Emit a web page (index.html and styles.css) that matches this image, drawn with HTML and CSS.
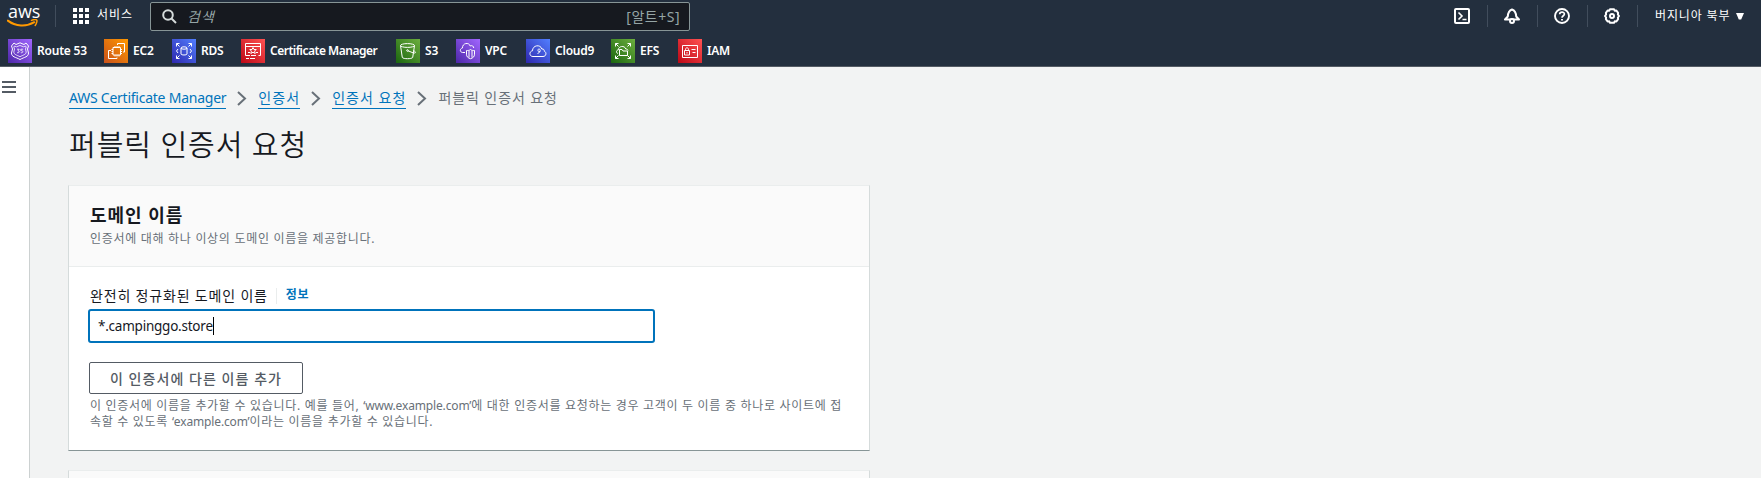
FILE: index.html
```html
<!DOCTYPE html>
<html lang="ko">
<head>
<meta charset="utf-8">
<title>퍼블릭 인증서 요청</title>
<link rel="stylesheet" href="styles.css">
</head>
<body>
<header class="header">
  <div class="topbar">
    <div class="logo"><span class="logo-text">aws</span>
      <svg class="smile" width="32" height="9" viewBox="0 0 32 9"><path d="M.8 1.6C8.500 7.500 19.500 8 27.300 3.200" fill="none" stroke="#f90" stroke-width="2" stroke-linecap="round"/><path d="M24.500 1.400c2-.9 4.500-.9 5.200-.4.600.8-.1 3.700-1.500 5.400" fill="none" stroke="#f90" stroke-width="1.500" stroke-linecap="round"/></svg>
    </div>
    <span class="divider"></span>
    <div class="services">
      <svg width="16" height="16" viewBox="0 0 16 16" fill="#fff"><path d="M0 0h4v4H0zM6 0h4v4H6zM12 0h4v4h-4zM0 6h4v4H0zM6 6h4v4H6zM12 6h4v4h-4zM0 12h4v4H0zM6 12h4v4H6zM12 12h4v4h-4z"/></svg>
      <span class="services-label">서비스</span>
    </div>
    <div class="search">
      <svg width="15" height="15" viewBox="0 0 15 15" fill="none" stroke="#d5dbdb" stroke-width="2"><circle cx="6" cy="6" r="4.800"/><path d="M9.500 9.500l4.500 4.500"/></svg>
      <span class="search-hint">검색</span>
      <span class="search-key">[알트+S]</span>
    </div>
    <div class="tools">
      <span class="tool"><svg width="16" height="16" viewBox="0 0 16 16" fill="none" stroke="#fff" stroke-width="2"><rect x="1" y="1" width="14" height="14" rx="1"/><path d="M4.500 4.500L8 8l-3.500 3.500M8.500 11.500h4" stroke-width="1.600"/></svg></span>
      <span class="tool"><svg width="16" height="16" viewBox="0 0 16 16" fill="none" stroke="#fff" stroke-width="2" stroke-linejoin="round"><path d="M1 11.500h14L12.200 8.500C12 5 11 2.500 8 1.500 5 2.500 4 5 3.800 8.500z"/><circle cx="8" cy="13" r="2" fill="#232f3e"/></svg></span>
      <span class="tool"><svg width="16" height="16" viewBox="0 0 16 16" fill="none" stroke="#fff" stroke-width="1.900"><circle cx="8" cy="8" r="7"/><path d="M5.700 6.300c0-3 4.700-2.900 4.700-.2C10.400 7.800 8 7.700 8 9.800" stroke-width="1.700"/><path d="M8 10.900v1.700"/></svg></span>
      <span class="tool"><svg width="16" height="16" viewBox="0 0 16 16" fill="none" stroke="#fff" stroke-width="2"><path d="M6 1.200h4l.7 1.500 1.700-.2 1.700 2.300-.2 1.700 1.100 1.500-1.100 1.500.2 1.700-1.700 2.300-1.700-.2-.7 1.500H6l-.7-1.500-1.700.2-1.700-2.300.2-1.700L1 8l1.100-1.500-.2-1.700 1.700-2.300 1.700.2z" stroke-linejoin="round"/><circle cx="8" cy="8" r="2"/></svg></span>
      <div class="region"><span class="region-label">버지니아 북부</span><svg width="8" height="7" viewBox="0 0 8 7"><path d="M0 0h8L5.200 6.500H2.800z" fill="#fff"/></svg></div>
    </div>
  </div>
  <nav class="favorites">
    <a class="fav"><svg class="purple" viewBox="0 0 24 24"><path d="M6 4l2 1.500L12 3.800l4 1.700L18 4l2.500 3-1 3 1 4c0 4-4 4-8.500 6.500C7.500 18 3.500 18 3.500 14l1-4-1-3z"/><path d="M6.500 7l2 .8L12 6.500l3.500 1.300 2-.8.7 1-.7 2 .7 3c0 2.500-3 3-6.200 4.700C8.800 16 5.800 15.500 5.800 13l.7-3-.7-2zM9 10.200h2.200l-1.200 1.500c2 .2 1.500 2.500-1 2M15.200 10.200h-2.400v1.500c3-.3 2.500 2.500 0 2" stroke-width=".8"/></svg><span class="fav-name">Route 53</span></a>
    <a class="fav"><svg class="orange" viewBox="0 0 24 24"><path d="M9 8.500h7.500V16H9zM11 8.500V7M13 8.500V7M15 8.500V7M11 17.500V16M13 17.500V16M15 17.500V16M9 10.500H7.500M9 12.500H7.500M9 14.500H7.500M18 10.500h-1.500M18 12.500h-1.500M18 14.500h-1.500M13.500 6V4.500h7V13H19M7 11.500H4.500v8H13V18.500"/></svg><span class="fav-name">EC2</span></a>
    <a class="fav"><svg class="blue" viewBox="0 0 24 24"><path d="M4.500 7.500v-3h3M4.500 4.500l3 3M16.500 4.500h3v3M19.500 4.500l-3 3M4.500 16.500v3h3M4.500 19.500l3-3M16.500 19.500h3v-3M19.500 19.500l-3-3M6 10l-1.500 2L6 14M18 10l1.500 2-1.500 2M9 9v6c0 1.300 6 1.300 6 0V9"/><ellipse cx="12" cy="9" rx="3" ry="1.200"/></svg><span class="fav-name">RDS</span></a>
    <a class="fav"><svg class="red" viewBox="0 0 24 24"><path d="M4.500 16.500v-12h15v12h-2M4.500 7.500h15M4.500 16.500H7M5 19.500h3M9 19.500h5M7 13.500h2M7 16.500h2M10 16.500h5M15 13.500h2"/><path d="M12 8.500l1 2h2.200l-1.600 1.600.6 2.400-2.200-1.300-2.200 1.300.6-2.400-1.600-1.600H11z"/></svg><span class="fav-name fav-name-tight">Certificate Manager</span></a>
    <a class="fav"><svg class="green" viewBox="0 0 24 24"><ellipse cx="11.500" cy="6.500" rx="7" ry="1.900"/><path d="M4.500 6.500l1.800 12c1.200 1.600 9.200 1.600 10.400 0l1.800-12M12 11.800l5 2c3 .8 3.500-.8.500-2.300"/><circle cx="11.500" cy="11.500" r=".8"/></svg><span class="fav-name">S3</span></a>
    <a class="fav"><svg class="purple" viewBox="0 0 24 24"><path d="M9 13.500H6.500C3.500 13 3.700 9.500 6.500 9 6.200 4 13 2.800 14.200 7c2-1 3.500.3 3.500 2"/><path d="M14.500 10.500c1.200 1 2.500 1 4 1v3.700c0 2.500-1.500 3.800-4 4.500-2.500-.7-4-2-4-4.500v-3.700c1.500 0 2.800 0 4-1zM13 11.500v7M16 11.500v7"/></svg><span class="fav-name">VPC</span></a>
    <a class="fav"><svg class="blue" viewBox="0 0 24 24"><path d="M7 17.500c-4 0-4-5.300-.5-5.700C6.500 6 14.500 5 15.800 10c2-.3 2.500 1 2.500 2.200 2.500.8 2.200 5.300-1.300 5.300z"/><path d="M14 12.500c-2.500 1-2.700-2.800-.8-2.500 2 .3 1 4-1.700 4.500" stroke-width=".9"/></svg><span class="fav-name">Cloud9</span></a>
    <a class="fav"><svg class="green" viewBox="0 0 24 24"><path d="M4.500 7.500v-3h3M4.500 4.500l3 3M16.500 4.500h3v3M19.500 4.500l-3 3M4.500 16.500v3h3M4.500 19.500l3-3M16.500 19.500h3v-3M19.500 19.500l-3-3M8.500 16.500v-6H11l1 1.500h4.500v4.500zM7 14.500c-2.500-.8-1.500-3.500.2-3.500.3-4 6.300-5 7.600-1 1.500 0 2 .7 2.200 1.500"/></svg><span class="fav-name">EFS</span></a>
    <a class="fav"><svg class="red" viewBox="0 0 24 24"><path d="M4.500 6.500h15v12h-15zM6.500 11.500h5v4.500h-5zM7.500 11.500v-1.200c0-2 3-2 3 0v1.200M9 13v1.500M13.500 10.500h4M14.500 13.500h3"/></svg><span class="fav-name">IAM</span></a>
  </nav>
</header>
<div class="body">
  <aside class="side"><svg width="14" height="12" viewBox="0 0 14 12" fill="#545b64"><path d="M0 0h14v2H0zM0 5h14v2H0zM0 10h14v2H0z"/></svg></aside>
  <main class="main">
    <nav class="crumbs">
      <a class="crumb crumb-latin">AWS Certificate Manager</a>
      <svg class="chev" viewBox="0 0 10 15"><path d="M1 1l7 6.500L1 14"/></svg>
      <a class="crumb">인증서</a>
      <svg class="chev" viewBox="0 0 10 15"><path d="M1 1l7 6.500L1 14"/></svg>
      <a class="crumb">인증서 요청</a>
      <svg class="chev" viewBox="0 0 10 15"><path d="M1 1l7 6.500L1 14"/></svg>
      <span class="crumb-current">퍼블릭 인증서 요청</span>
    </nav>
    <h1 class="title">퍼블릭 인증서 요청</h1>
    <section class="card">
      <div class="card-head">
        <h2 class="card-title">도메인 이름</h2>
        <p class="card-sub">인증서에 대해 하나 이상의 도메인 이름을 제공합니다.</p>
      </div>
      <div class="card-body">
        <div class="label-row"><span class="label">완전히 정규화된 도메인 이름</span><a class="info">정보</a></div>
        <div class="input"><span class="value">*.campinggo.store</span><span class="caret"></span></div>
        <div class="button"><span class="button-label">이 인증서에 다른 이름 추가</span></div>
        <p class="help">이 인증서에 이름을 추가할 수 있습니다. 예를 들어, <span class="latin">‘www.example.com’</span>에 대한 인증서를 요청하는 경우 고객이 두 이름 중 하나로 사이트에 접<br>속할 수 있도록 <span class="latin">‘example.com’</span>이라는 이름을 추가할 수 있습니다.</p>
      </div>
    </section>
    <section class="card card-next"><div class="card-head"></div></section>
  </main>
</div>
</body>
</html>
```
FILE: styles.css
```css
* { box-sizing: border-box; }
body { margin: 0; height: 478px; overflow: hidden; background: #f2f3f3; color: #16191f; font-family: "Noto Sans", "Noto Sans CJK KR", sans-serif; font-size: 14px; }
svg { display: block; flex: none; }
span, a, h1, h2, p { white-space: nowrap; }
.header { height: 67px; background: #232f3e; border-bottom: 1px solid #545b64; color: #fff; }
.topbar { display: flex; align-items: center; height: 32px; padding-left: 7px; }
.logo { width: 48px; height: 32px; padding-top: 3px; }
.logo-text { display: block; height: 16px; font: 500 18px/16px "Open Sans", sans-serif; letter-spacing: -0.1px; padding-left: 1px; }
.divider { width: 1px; height: 22px; background: #414d5c; }
.services { display: flex; align-items: center; gap: 8px; margin-left: 17px; width: 77px; }
.services-label { font-size: 12px; line-height: 16px; margin-top: -3px; letter-spacing: 0.9px; }
.search { display: flex; align-items: center; width: 540px; height: 29px; padding: 0 9px 0 11px; border: 1px solid #879596; border-radius: 2px; background: #16191f; color: #95a5a6; }
.search-hint { margin-left: 10px; font-size: 14px; font-style: italic; letter-spacing: 1px; }
.search-key { margin-left: auto; font-size: 14px; letter-spacing: 0.5px; }
.tools { display: flex; align-items: center; margin-left: auto; height: 22px; }
.tool { display: flex; align-items: center; justify-content: flex-end; width: 50px; height: 22px; padding-right: 17px; border-right: 1px solid #414d5c; }
.region { display: flex; align-items: center; gap: 6px; width: 123px; padding-left: 17px; }
.region-label { margin-top: -3px; font-size: 12px; letter-spacing: 0.85px; }
.favorites { display: grid; grid-template-columns: 96px 68px 69px 155px 60px 70px 85px 67px 60px; padding: 7px 0 0 8px; }
.fav { display: flex; align-items: center; gap: 5px; height: 24px; }
.fav svg { width: 24px; height: 24px; fill: none; stroke: #fff; stroke-width: 1; }
.fav-name { font: 600 12px/16px "Noto Sans", sans-serif; letter-spacing: -0.2px; }
.fav-name-tight { letter-spacing: -0.5px; }
.purple { background: linear-gradient(45deg, #4d27a8, #a166ff); }
.orange { background: linear-gradient(45deg, #c8511b, #f90); }
.blue { background: linear-gradient(45deg, #2e27ad, #527fff); }
.red { background: linear-gradient(45deg, #bd0816, #ff5252); }
.green { background: linear-gradient(45deg, #1b660f, #6cae3e); }
.body { display: flex; height: 411px; overflow: hidden; }
.side { width: 30px; padding: 14px 0 0 2px; background: #fff; border-right: 1px solid #ccd1d1; }
.main { width: 840px; height: 411px; overflow: hidden; padding-left: 38px; }
.crumbs { display: flex; align-items: center; height: 22px; margin-top: 20px; padding-left: 1px; color: #687078; }
.crumb { height: 21px; line-height: 19px; color: #0073bb; border-bottom: 1px solid #0073bb; letter-spacing: 1.05px; }
.crumb-latin { letter-spacing: -0.24px; }
.crumb-current { margin-top: -2px; letter-spacing: 0.9px; }
.chev { width: 10px; height: 15px; margin: 0 11px; fill: none; stroke: #687078; stroke-width: 2; }
.title { margin: 16px 0 0; height: 40px; padding-left: 1px; font-size: 29px; line-height: 40px; font-weight: 350; letter-spacing: 0.95px; }
.card { width: 802px; height: 266px; margin-top: 20px; background: #fff; border: 1px solid #d5dbdb; border-top-color: #eaeded; border-bottom-color: #879596; }
.card-next { margin-top: 19px; }
.card-head { height: 81px; padding: 17px 21px 0; background: #fafafa; border-bottom: 1px solid #eaeded; }
.card-title { margin: 0; font-size: 18px; line-height: 24px; font-weight: 700; letter-spacing: 0.95px; }
.card-sub { margin: 4px 0 0; font-size: 12px; line-height: 16px; color: #687078; letter-spacing: 0.7px; }
.card-body { padding: 17px 19px; }
.label-row { display: flex; align-items: center; height: 22px; padding-left: 2px; }
.label { letter-spacing: 0.82px; }
.info { height: 16px; margin: 2px 0 0 8px; padding-left: 9px; border-left: 1px solid #eaeded; font-size: 12px; line-height: 14px; font-weight: 700; color: #0073bb; letter-spacing: 0.6px; }
.input { display: flex; align-items: center; width: 567px; height: 34px; margin-top: 3px; padding-left: 8px; border: 2px solid #0073bb; border-radius: 3px; }
.value { font-size: 13.5px; letter-spacing: -0.23px; }
.caret { width: 1px; height: 18px; background: #000; }
.button { display: flex; align-items: center; justify-content: center; width: 214px; height: 32px; margin: 19px 0 0 1px; border: 1px solid #545b64; border-radius: 2px; color: #545b64; }
.button-label { font-weight: 500; letter-spacing: 1.05px; }
.help { margin: 4px 0 0 2px; font-size: 12px; line-height: 16px; color: #687078; letter-spacing: 0.7px; }
.latin { letter-spacing: -0.15px; }
```
